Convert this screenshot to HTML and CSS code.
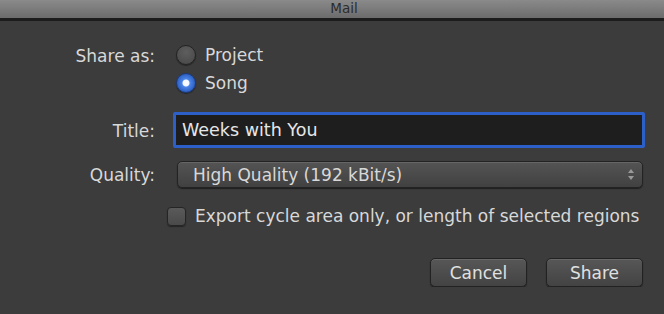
FILE: index.html
```html
<!DOCTYPE html>
<html lang="en">
<head>
  <meta charset="UTF-8">
  <meta name="viewport" content="width=device-width, initial-scale=1.0">
  <title>Mail</title>
  <link rel="stylesheet" href="styles.css">
</head>
<body>
  <div class="titlebar">Mail</div>
  <div class="dialog">
    <div class="form">
      <div class="label share-label">Share as:</div>
      <div class="radios">
        <div class="radio-row">
          <span class="radio"></span>
          <span>Project</span>
        </div>
        <div class="radio-row">
          <span class="radio checked"></span>
          <span>Song</span>
        </div>
      </div>

      <div class="label title-label">Title:</div>
      <div class="field">Weeks with You</div>

      <div class="label quality-label">Quality:</div>
      <div class="popup">
        <span>High Quality (192 kBit/s)</span>
        <svg class="arrows" width="8" height="13" viewBox="0 0 8 13">
          <path d="M1 5 L4 1 L7 5 Z" fill="#9a9a9a"/>
          <path d="M1 8 L4 12 L7 8 Z" fill="#9a9a9a"/>
        </svg>
      </div>
    </div>

    <div class="check-row">
      <span class="checkbox"></span>
      <span>Export cycle area only, or length of selected regions</span>
    </div>

    <div class="buttons">
      <button class="btn">Cancel</button>
      <button class="btn">Share</button>
    </div>
  </div>
</body>
</html>
```

FILE: styles.css
```css
body {
  margin: 0;
  background-color: #3c3c3c;
  font-family: "DejaVu Sans", "Liberation Sans", sans-serif;
  color: #d8d8d8;
  font-size: 17px;
  line-height: 20px;
}
.titlebar {
  height: 18px;
  line-height: 17px;
  background: linear-gradient(#8a8a8a, #6c6c6c);
  border-bottom: 3px solid #1c1c1c;
  color: #2c2c2c;
  font-size: 13.5px;
  text-align: center;
  padding-left: 24px;
}
.dialog {
  padding: 24px 19px 0 0;
}
.form {
  display: grid;
  grid-template-columns: 155px 1fr;
  column-gap: 18px;
  row-gap: 0;
}
.label {
  text-align: right;
}
.share-label {
  padding-top: 1px;
}
.radios {
  display: flex;
  flex-direction: column;
  gap: 8px;
  padding-left: 3px;
}
.radio-row {
  display: flex;
  align-items: center;
  gap: 9px;
  height: 20px;
}
.radio {
  width: 18px;
  height: 18px;
  border-radius: 50%;
  border: 1px solid #232323;
  background: radial-gradient(circle at 50% 35%, #5e5e5e, #464646);
  box-shadow: 0 1px 1px rgba(0, 0, 0, 0.4);
}
.radio.checked {
  background: radial-gradient(circle, #ffffff 0, #f2f6ff 3px, #4c86e8 4px, #2d5fc2 9px);
  border-color: #1b3a7a;
}
.title-label {
  margin-top: 19px;
  padding-top: 9px;
}
.field {
  margin-top: 19px;
  height: 30px;
  line-height: 30px;
  border: 3px solid #2c60c8;
  border-radius: 2px;
  background-color: #1e1e1e;
  color: #e6e6e6;
  padding-left: 6px;
  font-size: 17.5px;
}
.quality-label {
  margin-top: 13px;
  padding-top: 4px;
}
.popup {
  margin: 13px 2px 0 4px;
  height: 25px;
  border: 1px solid #232323;
  border-radius: 5px;
  background: linear-gradient(#545454, #414141);
  box-shadow: 0 1px 1px rgba(0, 0, 0, 0.5), inset 0 1px 0 #666;
  display: flex;
  align-items: center;
  justify-content: space-between;
  padding: 0 7px 0 15px;
}
.check-row {
  display: flex;
  align-items: center;
  gap: 9px;
  margin: 18px 0 0 167px;
}
.checkbox {
  width: 17px;
  height: 17px;
  border: 1px solid #252525;
  border-radius: 4px;
  background: linear-gradient(#5a5a5a, #4a4a4a);
  box-shadow: 0 1px 1px rgba(0, 0, 0, 0.4);
}
.buttons {
  display: flex;
  justify-content: flex-end;
  gap: 19px;
  margin-top: 32px;
  padding-right: 2px;
}
.btn {
  width: 97px;
  height: 29px;
  font-family: "DejaVu Sans", "Liberation Sans", sans-serif;
  font-size: 17px;
  color: #e0e0e0;
  border: 1px solid #222;
  border-radius: 5px;
  background: linear-gradient(#575757, #434343);
  box-shadow: 0 1px 1px rgba(0, 0, 0, 0.5), inset 0 1px 0 #676767;
}
```
